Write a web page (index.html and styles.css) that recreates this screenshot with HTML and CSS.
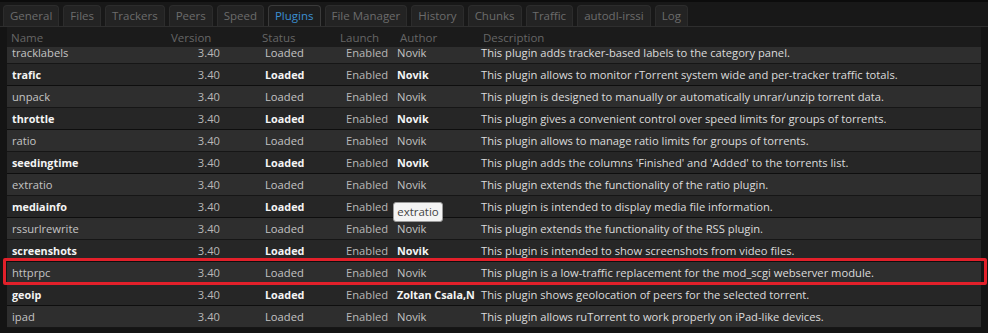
FILE: index.html
```html
<!DOCTYPE html>
<html>
<head>
<meta charset="utf-8">
<link rel="stylesheet" href="styles.css">
</head>
<body>
<div class="page">
  <div class="tabs">
    <div class="tab">General</div>
    <div class="tab">Files</div>
    <div class="tab">Trackers</div>
    <div class="tab">Peers</div>
    <div class="tab">Speed</div>
    <div class="tab active">Plugins</div>
    <div class="tab">File Manager</div>
    <div class="tab">History</div>
    <div class="tab">Chunks</div>
    <div class="tab">Traffic</div>
    <div class="tab">autodl-irssi</div>
    <div class="tab">Log</div>
  </div>
  <div class="table">
    <div class="head">
      <div class="c name">Name</div>
      <div class="c ver">Version</div>
      <div class="c status">Status</div>
      <div class="c launch">Launch</div>
      <div class="c author">Author</div>
      <div class="c desc">Description</div>
    </div>
    <div class="body">
      <div class="rows">
        <div class="row"><div class="c name">tracklabels</div><div class="c ver">3.40</div><div class="c status">Loaded</div><div class="c launch">Enabled</div><div class="c author">Novik</div><div class="c desc">This plugin adds tracker-based labels to the category panel.</div></div>
        <div class="row b"><div class="c name">trafic</div><div class="c ver">3.40</div><div class="c status">Loaded</div><div class="c launch">Enabled</div><div class="c author">Novik</div><div class="c desc">This plugin allows to monitor rTorrent system wide and per-tracker traffic totals.</div></div>
        <div class="row"><div class="c name">unpack</div><div class="c ver">3.40</div><div class="c status">Loaded</div><div class="c launch">Enabled</div><div class="c author">Novik</div><div class="c desc">This plugin is designed to manually or automatically unrar/unzip torrent data.</div></div>
        <div class="row b"><div class="c name">throttle</div><div class="c ver">3.40</div><div class="c status">Loaded</div><div class="c launch">Enabled</div><div class="c author">Novik</div><div class="c desc">This plugin gives a convenient control over speed limits for groups of torrents.</div></div>
        <div class="row"><div class="c name">ratio</div><div class="c ver">3.40</div><div class="c status">Loaded</div><div class="c launch">Enabled</div><div class="c author">Novik</div><div class="c desc">This plugin allows to manage ratio limits for groups of torrents.</div></div>
        <div class="row b"><div class="c name">seedingtime</div><div class="c ver">3.40</div><div class="c status">Loaded</div><div class="c launch">Enabled</div><div class="c author">Novik</div><div class="c desc">This plugin adds the columns 'Finished' and 'Added' to the torrents list.</div></div>
        <div class="row"><div class="c name">extratio</div><div class="c ver">3.40</div><div class="c status">Loaded</div><div class="c launch">Enabled</div><div class="c author">Novik</div><div class="c desc">This plugin extends the functionality of the ratio plugin.</div></div>
        <div class="row b"><div class="c name">mediainfo</div><div class="c ver">3.40</div><div class="c status">Loaded</div><div class="c launch">Enabled</div><div class="c author">Novik</div><div class="c desc">This plugin is intended to display media file information.</div></div>
        <div class="row"><div class="c name">rssurlrewrite</div><div class="c ver">3.40</div><div class="c status">Loaded</div><div class="c launch">Enabled</div><div class="c author">Novik</div><div class="c desc">This plugin extends the functionality of the RSS plugin.</div></div>
        <div class="row b"><div class="c name">screenshots</div><div class="c ver">3.40</div><div class="c status">Loaded</div><div class="c launch">Enabled</div><div class="c author">Novik</div><div class="c desc">This plugin is intended to show screenshots from video files.</div></div>
        <div class="row"><div class="c name">httprpc</div><div class="c ver">3.40</div><div class="c status">Loaded</div><div class="c launch">Enabled</div><div class="c author">Novik</div><div class="c desc">This plugin is a low-traffic replacement for the mod_scgi webserver module.</div></div>
        <div class="row b"><div class="c name">geoip</div><div class="c ver">3.40</div><div class="c status">Loaded</div><div class="c launch">Enabled</div><div class="c author">Zoltan Csala,N</div><div class="c desc">This plugin shows geolocation of peers for the selected torrent.</div></div>
        <div class="row"><div class="c name">ipad</div><div class="c ver">3.40</div><div class="c status">Loaded</div><div class="c launch">Enabled</div><div class="c author">Novik</div><div class="c desc">This plugin allows ruTorrent to work properly on iPad-like devices.</div></div>
      </div>
    </div>
  </div>
  <div class="tooltip">extratio</div>
  <div class="highlight"></div>
</div>
</body>
</html>
```

FILE: styles.css
```css
html, body {
  margin: 0;
  padding: 0;
  background: #141414;
  width: 988px;
  height: 333px;
  overflow: hidden;
}
.page {
  position: relative;
  width: 988px;
  height: 333px;
  font-family: "Open Sans", "DejaVu Sans", sans-serif;
  font-size: 11.2px;
}
.tabs {
  display: flex;
  gap: 4px;
  height: 21px;
  padding: 5px 0 0 3px;
  border-bottom: 1px solid #2e2e2e;
  background: #181818;
  box-shadow: inset 0 2px 0 #0c0c0c;
}
.tab {
  height: 20px;
  line-height: 20px;
  padding: 0 6px;
  color: #6c6c6c;
  background: #232323;
  border: 1px solid #2c2c2c;
  border-bottom: none;
  border-radius: 4px 4px 0 0;
  font-size: 11.5px;
}
.tab.active {
  color: #3b8fd3;
  background: #1e1e1e;
  border-color: #3a3a3a;
}
.table {
  margin: 0 7px;
}
.head, .row {
  display: grid;
  grid-template-columns: 160px 91px 79px 58px 83px 1fr;
}
.head {
  height: 20px;
  line-height: 21px;
  background: #1b1b1b;
  color: #666;
  font-size: 11.5px;
}
.head .c {
  padding-left: 4px;
}
.head .launch { padding-left: 3px; }
.head .author { padding-left: 5px; }
.head .desc { padding-left: 5px; }
.c {
  white-space: nowrap;
  overflow: hidden;
}
.body {
  height: 286px;
  overflow: hidden;
}
.rows {
  margin-top: -5px;
}
.row {
  height: 21px;
  line-height: 21px;
  border-bottom: 1px solid #161616;
  background: #2e2e2e;
  color: #c4c4c4;
}
.row.b {
  background: #262626;
  border-bottom-color: #0e0e0e;
}
.row .name { padding-left: 5px; }
.row .ver { text-align: right; padding-right: 38px; color: #b8b8b8; }
.row .status { padding-left: 7px; }
.row .launch { padding-left: 9px; color: #b8b8b8; }
.row .author { padding-left: 2px; }
.row .desc { padding-left: 3px; color: #dcdcdc; }
.row.b .name, .row.b .status, .row.b .author {
  font-weight: bold;
  font-size: 10.8px;
  color: #f4f4f4;
}
.tooltip {
  position: absolute;
  left: 393px;
  top: 202px;
  width: 48px;
  height: 18px;
  line-height: 18px;
  text-align: center;
  background: #f4f4f4;
  border: 1px solid #9a9a9a;
  border-radius: 3px;
  color: #444;
  font-size: 11.5px;
}
.highlight {
  position: absolute;
  left: 3px;
  top: 258px;
  width: 978px;
  height: 21px;
  border: 3px solid #e2202a;
  border-radius: 2px;
}
```
